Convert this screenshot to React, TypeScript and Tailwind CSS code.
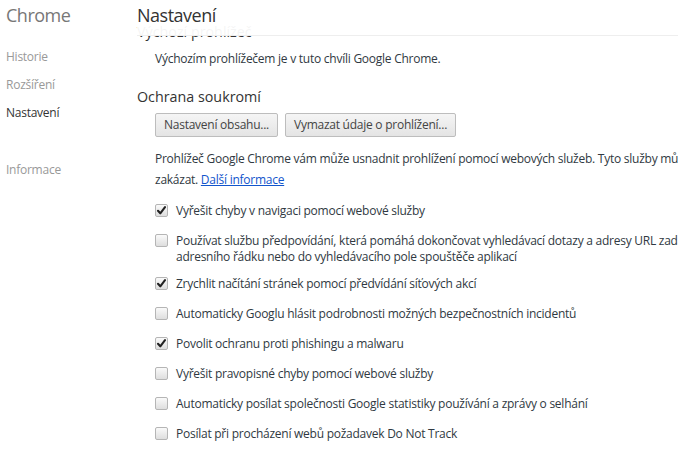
import React from "react";

function Box({ checked }: { checked?: boolean }) {
  return (
    <div className="relative mt-[1px] h-[13px] w-[13px] shrink-0 rounded-[2px] border border-[#b5b5b5] bg-gradient-to-b from-[#fafafa] to-[#dedede]">
      {checked && (
        <svg viewBox="0 0 13 13" className="absolute left-[-1px] top-[-1px] h-[13px] w-[13px]">
          <path d="M3 6.8 L5.3 9.3 L10 3.2" fill="none" stroke="#222" strokeWidth="2.1" strokeLinecap="round" strokeLinejoin="round" />
        </svg>
      )}
    </div>
  );
}

function Row({ checked, children, className }: { checked?: boolean; children: React.ReactNode; className?: string }) {
  return (
    <div className={"flex items-start gap-[8px] whitespace-nowrap leading-[16px] " + (className ?? "")}>
      <Box checked={checked} />
      <div>{children}</div>
    </div>
  );
}

export default function App() {
  return (
    <div className="flex h-[458px] w-[678px] overflow-hidden bg-white font-['Open_Sans',sans-serif] text-[12px] tracking-[-0.25px] text-[#303942]">
      <div className="w-[137px] shrink-0 pl-[6px]">
        <div className="pt-[2px] text-[18px] leading-[26px] tracking-[-0.5px] text-[#777]">Chrome</div>
        <div className="mt-[15px] flex flex-col text-[#999]">
          <div className="leading-[28px]">Historie</div>
          <div className="leading-[28px]">Rozšíření</div>
          <div className="leading-[28px] text-[#333]">Nastavení</div>
          <div className="mt-[29px] leading-[28px]">Informace</div>
        </div>
      </div>
      <div className="min-w-0 flex-1">
        <div className="relative z-10 h-[36px] border-b border-[#eeeeee] bg-white/[0.95]">
          <div className="pt-[2px] text-[18px] leading-[26px] tracking-[-0.5px] text-[#333]">Nastavení</div>
        </div>
        <div className="mt-[-13px] text-[14.3px] leading-[18px] tracking-normal text-[#333]">Výchozí prohlížeč</div>
        <div className="mt-[10px] pl-[18px] leading-[16px]">Výchozím prohlížečem je v tuto chvíli Google Chrome.</div>
        <div className="mt-[21px] text-[14.3px] leading-[18px] tracking-normal text-[#333]">Ochrana soukromí</div>
        <div className="mt-[7px] flex gap-[7px] pl-[18px]">
          <button className="h-[24px] rounded-[2px] border border-[#bdbdbd] bg-gradient-to-b from-[#f5f5f5] to-[#e4e4e4] px-[8px] text-[12px] text-[#444]">Nastavení obsahu...</button>
          <button className="h-[24px] rounded-[2px] border border-[#bdbdbd] bg-gradient-to-b from-[#f5f5f5] to-[#e4e4e4] px-[8px] text-[12px] text-[#444]">Vymazat údaje o prohlížení...</button>
        </div>
        <div className="mt-[11px] whitespace-nowrap pl-[18px] leading-[21px]">
          <div>Prohlížeč Google Chrome vám může usnadnit prohlížení pomocí webových služeb. Tyto služby můžete volitelně</div>
          <div>
            zakázat. <span className="text-[#15c] underline">Další informace</span>
          </div>
        </div>
        <div className="mt-[13px] flex flex-col gap-[14px] pl-[18px]">
          <Row checked>Vyřešit chyby v navigaci pomocí webové služby</Row>
          <Row className="mb-[-3px]">
            Používat službu předpovídání, která pomáhá dokončovat vyhledávací dotazy a adresy URL zadávané do
            <br />
            adresního řádku nebo do vyhledávacího pole spouštěče aplikací
          </Row>
          <Row checked>Zrychlit načítání stránek pomocí předvídání síťových akcí</Row>
          <Row>Automaticky Googlu hlásit podrobnosti možných bezpečnostních incidentů</Row>
          <Row checked>Povolit ochranu proti phishingu a malwaru</Row>
          <Row>Vyřešit pravopisné chyby pomocí webové služby</Row>
          <Row>Automaticky posílat společnosti Google statistiky používání a zprávy o selhání</Row>
          <Row>Posílat při procházení webů požadavek Do Not Track</Row>
        </div>
      </div>
    </div>
  );
}
